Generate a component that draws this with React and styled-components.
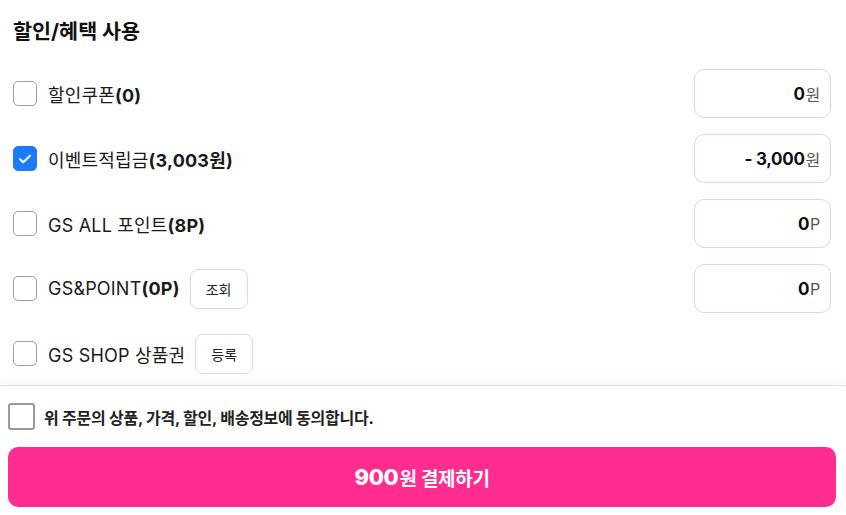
import React from "react";
import styled, { createGlobalStyle } from "styled-components";

const Global = createGlobalStyle`
  html, body { margin: 0; padding: 0; background: #fff; }
  body { font-family: Inter, "Noto Sans CJK KR", sans-serif; color: #111; }
  * { box-sizing: border-box; }
`;

const Page = styled.div`
  width: 846px;
  height: 515px;
  display: flex;
  flex-direction: column;
  overflow: hidden;
`;

const Top = styled.section`
  padding: 16px 15px 7px 13px;
  display: flex;
  flex-direction: column;
  flex: 1;
`;

const Title = styled.h2`
  margin: 0 0 21px;
  font-size: 20.7px;
  line-height: 32px;
  font-weight: 700;
  color: #111;
`;

const List = styled.div`
  display: flex;
  flex-direction: column;
  gap: 16px;
`;

const Row = styled.div`
  height: 49px;
  display: flex;
  align-items: center;
`;

const Box = styled.span`
  width: 24px;
  height: 25px;
  flex: none;
  border-radius: 5px;
  border: 1px solid ${(p) => (p.$checked ? "#1c7bf9" : "#9e98bd")};
  background: ${(p) => (p.$checked ? "#1c7bf9" : "#fff")};
  display: flex;
  align-items: center;
  justify-content: center;
`;

const Label = styled.span`
  margin-left: 11px;
  font-size: 18px;
  font-weight: 400;
  color: #1a1a1a;
  letter-spacing: 0.2px;
  b { font-weight: 700; }
`;

const SmallBtn = styled.button`
  margin-left: 10px;
  width: 58px;
  height: 40px;
  border: 1px solid #dcd9ea;
  border-radius: 8px;
  background: #fff;
  font-family: inherit;
  font-size: 14px;
  color: #222;
  padding: 0;
`;

const Amount = styled.div`
  margin-left: auto;
  width: 137px;
  height: 49px;
  border: 1px solid #dad7ea;
  border-radius: 10px;
  display: flex;
  align-items: center;
  justify-content: flex-end;
  padding-right: 10px;
  font-size: 17px;
  font-weight: 700;
  color: #111;
  letter-spacing: -0.3px;
`;

const Unit = styled.span`
  font-weight: 400;
  font-size: 16px;
  color: #555;
  margin-left: 1px;
`;

const Footer = styled.footer`
  border-top: 1px solid #e4e4e4;
  box-shadow: 0 -6px 10px rgba(0, 0, 0, 0.025);
  padding: 17px 10px 8px 8px;
  display: flex;
  flex-direction: column;
  gap: 17px;
`;

const Agree = styled.label`
  display: flex;
  align-items: center;
  height: 27px;
  gap: 9px;
  font-size: 16px;
  font-weight: 700;
  color: #222;
  letter-spacing: -0.25px;
`;

const AgreeBox = styled.span`
  width: 27px;
  height: 27px;
  border: 2px solid #9a9a9a;
  border-radius: 3px;
  background: #fff;
`;

const PayBtn = styled.button`
  height: 60px;
  width: 100%;
  border: none;
  border-radius: 10px;
  background: #ff2d8f;
  color: #fff;
  font-family: inherit;
  font-weight: 700;
  font-size: 19px;
  letter-spacing: -0.3px;
  display: flex;
  align-items: center;
  justify-content: center;
  gap: 1px;
`;

const Big = styled.span`
  font-size: 22px;
  font-weight: 800;
`;

const Check = () => (
  <svg width="16" height="16" viewBox="0 0 16 16">
    <path d="M3 8.3l3.2 3L13 4.8" fill="none" stroke="#fff" strokeWidth="2" strokeLinecap="round" strokeLinejoin="round" />
  </svg>
);

const items = [
  { label: "할인쿠폰", extra: "(0)", amount: "0", unit: "원" },
  { label: "이벤트적립금", extra: "(3,003원)", amount: "- 3,000", unit: "원", checked: true },
  { label: "GS ALL 포인트", extra: "(8P)", amount: "0", unit: "P" },
  { label: "GS&POINT", extra: "(0P)", amount: "0", unit: "P", btn: "조회" },
  { label: "GS SHOP 상품권", extra: "", btn: "등록" },
];

export default function App() {
  return (
    <Page>
      <Global />
      <Top>
        <Title>할인/혜택 사용</Title>
        <List>
          {items.map((it) => (
            <Row key={it.label}>
              <Box $checked={it.checked}>{it.checked && <Check />}</Box>
              <Label>
                {it.label}
                {it.extra && <b>{it.extra}</b>}
              </Label>
              {it.btn && <SmallBtn>{it.btn}</SmallBtn>}
              {it.amount && (
                <Amount>
                  {it.amount}
                  <Unit>{it.unit}</Unit>
                </Amount>
              )}
            </Row>
          ))}
        </List>
      </Top>
      <Footer>
        <Agree>
          <AgreeBox />
          위 주문의 상품, 가격, 할인, 배송정보에 동의합니다.
        </Agree>
        <PayBtn>
          <Big>900</Big>원 결제하기
        </PayBtn>
      </Footer>
    </Page>
  );
}
